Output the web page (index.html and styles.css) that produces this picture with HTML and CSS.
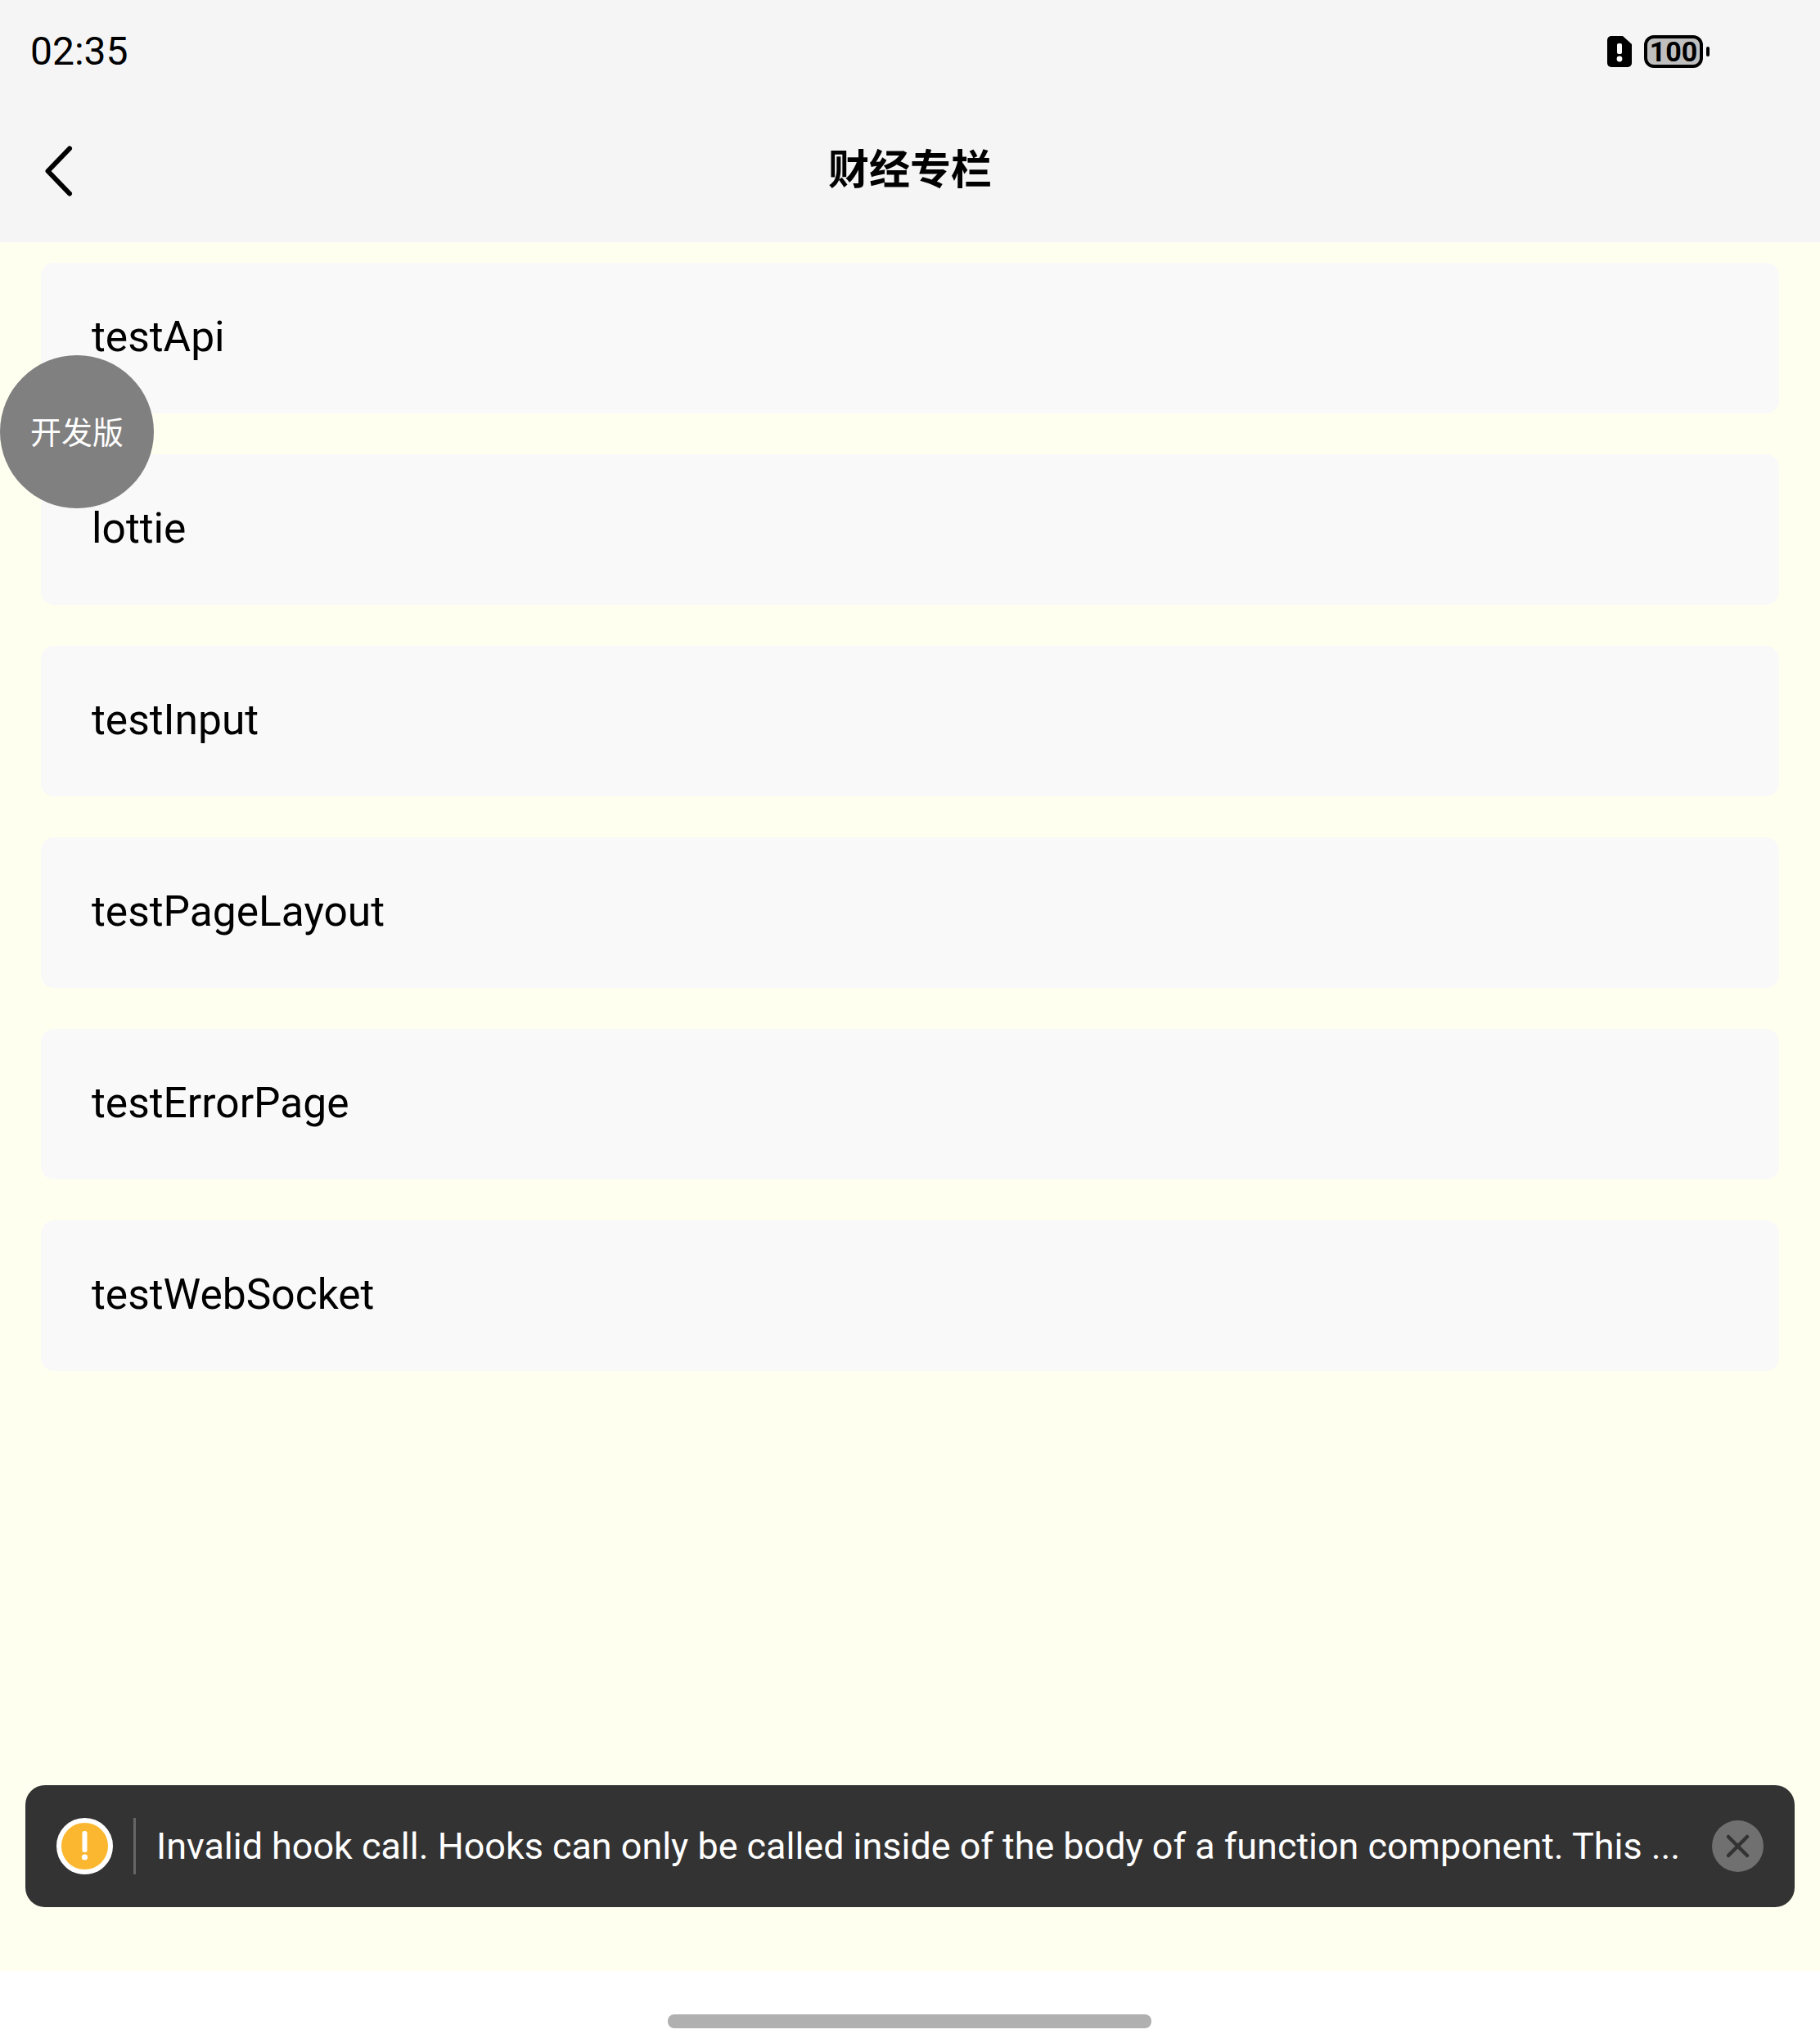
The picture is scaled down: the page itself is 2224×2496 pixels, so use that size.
FILE: index.html
```html
<!DOCTYPE html>
<html>
<head>
  <meta charset="UTF-8">
  <title>财经专栏</title>
  <link rel="stylesheet" href="styles.css">
</head>
<body>
  <header class="top">
    <div class="status-bar">
      <span class="time">02:35</span>
      <div class="status-icons">
        <svg class="sim-icon" width="30" height="38" viewBox="0 0 30 38">
          <path d="M5 0H19L30 10V33a5 5 0 0 1-5 5H5a5 5 0 0 1-5-5V5a5 5 0 0 1 5-5Z" fill="#000"/>
          <rect x="12" y="9" width="6" height="13" rx="2" fill="#fff"/>
          <circle cx="15" cy="28" r="3.4" fill="#fff"/>
        </svg>
        <div class="battery"><span class="battery-level">100</span></div>
        <div class="battery-nub"></div>
      </div>
    </div>
    <nav class="nav-bar">
      <svg class="back-icon" width="40" height="66" viewBox="0 0 40 66">
        <path d="M36 4.5L9.5 32L36 59.5" fill="none" stroke="#000" stroke-width="6" stroke-linecap="round" stroke-linejoin="round"/>
      </svg>
      <h1 class="nav-title">财经专栏</h1>
    </nav>
  </header>

  <main class="content">
    <div class="list-item">testApi</div>
    <div class="list-item">lottie</div>
    <div class="list-item">testInput</div>
    <div class="list-item">testPageLayout</div>
    <div class="list-item">testErrorPage</div>
    <div class="list-item">testWebSocket</div>
  </main>

  <footer class="home-area">
    <div class="home-bar"></div>
  </footer>

  <div class="dev-badge">开发版</div>

  <div class="toast">
    <svg class="toast-icon" width="69" height="69" viewBox="0 0 69 69">
      <circle cx="34.5" cy="34.5" r="31.5" fill="#fbb72f" stroke="#fff" stroke-width="6"/>
      <rect x="31.5" y="16" width="6" height="26" rx="2.5" fill="#fff"/>
      <circle cx="34.5" cy="48" r="3.6" fill="#fff"/>
    </svg>
    <div class="toast-divider"></div>
    <span class="toast-text">Invalid hook call. Hooks can only be called inside of the body of a function component. This ...</span>
    <svg class="toast-close" width="63" height="63" viewBox="0 0 63 63">
      <circle cx="31.5" cy="31.5" r="31.5" fill="#707070"/>
      <path d="M20 20L43 43M43 20L20 43" stroke="#333" stroke-width="4.5" stroke-linecap="round"/>
    </svg>
  </div>
</body>
</html>
```

FILE: styles.css
```css
html, body {
  margin: 0;
  height: 2496px;
}
body {
  position: relative;
  display: flex;
  flex-direction: column;
  overflow: hidden;
  background-color: #fff;
  color: #000;
  font-family: Roboto, "Noto Sans CJK SC", sans-serif;
}
.top {
  background-color: #f5f5f5;
  height: 296px;
}
.status-bar {
  height: 124px;
  padding: 0 135px 0 37px;
  display: flex;
  align-items: center;
  justify-content: space-between;
}
.time {
  font-size: 48px;
  font-weight: 450;
}
.status-icons {
  display: flex;
  align-items: center;
  margin-top: 2px;
}
.sim-icon {
  margin-right: 15px;
}
.battery {
  width: 72px;
  height: 40px;
  box-sizing: border-box;
  border: 4px solid #000;
  border-radius: 12px;
  background-color: #bfbfbf;
  display: flex;
  align-items: center;
  justify-content: center;
}
.battery-level {
  font-size: 34px;
  font-weight: 700;
  line-height: 32px;
}
.battery-nub {
  width: 4px;
  height: 12px;
  margin-left: 4px;
  border-radius: 2px;
  background-color: #000;
}
.nav-bar {
  height: 172px;
  padding-left: 49px;
  position: relative;
  display: flex;
  align-items: center;
}
.nav-title {
  position: absolute;
  left: 0;
  right: 0;
  margin: 0 0 14px;
  text-align: center;
  font-family: "Noto Sans CJK SC", sans-serif;
  font-size: 50px;
  font-weight: 700;
}
.content {
  flex: 1;
  background-color: #fffff0;
  padding: 25px 50px 0;
  display: flex;
  flex-direction: column;
  gap: 50px;
}
.list-item {
  height: 184px;
  padding: 0 0 3px 62px;
  box-sizing: border-box;
  border-radius: 16px;
  background-color: #f9f9f9;
  display: flex;
  align-items: center;
  font-size: 51.5px;
}
.home-area {
  height: 88px;
  display: flex;
  justify-content: center;
}
.home-bar {
  width: 591px;
  height: 17px;
  margin: 53px 2px 0 0;
  border-radius: 8px;
  background-color: #b0b0b0;
}
.dev-badge {
  position: absolute;
  left: 0;
  top: 434px;
  width: 188px;
  height: 187px;
  padding-bottom: 4px;
  box-sizing: border-box;
  border-radius: 50%;
  background-color: #808080;
  color: #fff;
  font-family: "Noto Sans CJK SC", sans-serif;
  font-size: 38px;
  display: flex;
  align-items: center;
  justify-content: center;
}
.toast {
  position: absolute;
  left: 31px;
  right: 31px;
  top: 2181px;
  height: 149px;
  box-sizing: border-box;
  padding: 0 38px;
  border-radius: 24px;
  background-color: #333;
  display: flex;
  align-items: center;
}
.toast-divider {
  width: 3px;
  height: 69px;
  margin: 0 25px 0 25px;
  background-color: #666;
}
.toast-text {
  flex: 1;
  color: #fff;
  font-size: 44.9px;
  white-space: nowrap;
}
.toast-icon, .toast-close {
  flex: none;
}
```
